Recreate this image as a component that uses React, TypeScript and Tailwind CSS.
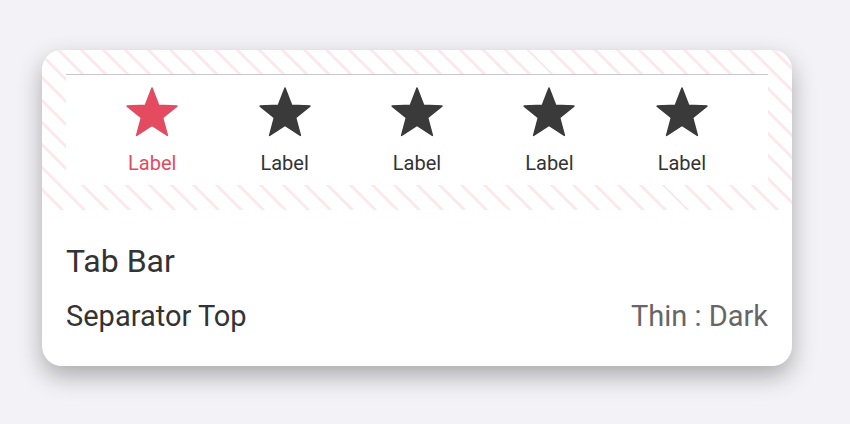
import React from "react";

function starPoints(cx: number, cy: number, R: number, r: number) {
  const pts: string[] = [];
  for (let i = 0; i < 10; i++) {
    const a = ((-90 + i * 36) * Math.PI) / 180;
    const rad = i % 2 === 0 ? R : r;
    pts.push(`${(cx + rad * Math.cos(a)).toFixed(2)},${(cy + rad * Math.sin(a)).toFixed(2)}`);
  }
  return pts.join(" ");
}

function Star({ color }: { color: string }) {
  return (
    <svg width="54" height="50" viewBox="0 0 54 50">
      <polygon
        points={starPoints(27, 27.2, 26.2, 11.2)}
        fill={color}
        stroke={color}
        strokeWidth="1.5"
        strokeLinejoin="round"
      />
    </svg>
  );
}

export default function App() {
  const items = [0, 1, 2, 3, 4];
  return (
    <div className="min-h-[424px] w-[850px] bg-[#f3f3f7] pl-[42px] pt-[50px] font-['Roboto',sans-serif]">
      <div className="w-[750px] overflow-hidden rounded-[20px] bg-white shadow-[0_10px_24px_rgba(0,0,0,0.3)]">
        <div className="bg-[repeating-linear-gradient(45deg,#ffffff_0px,#ffffff_13px,#fde8ec_13px,#fde8ec_15.8px)] px-6 pb-[25px] pt-6">
          <div className="flex border-t border-[#c8c8cc] bg-white px-5 pb-[10px] pt-[12px]">
            {items.map((i) => (
              <div key={i} className="flex flex-1 flex-col items-center">
                <Star color={i === 0 ? "#e44b61" : "#3a3a3a"} />
                <div
                  className={`mt-[14px] text-[20px] leading-6 ${i === 0 ? "text-[#e44b61]" : "text-[#333333]"}`}
                >
                  Label
                </div>
              </div>
            ))}
          </div>
        </div>
        <div className="px-6 pb-[33px] pt-8">
          <div className="text-[32px] leading-[38px] text-[#333333]">Tab Bar</div>
          <div className="mt-[19px] flex items-baseline justify-between text-[29px] leading-[34px]">
            <span className="text-[#333333]">Separator Top</span>
            <span className="text-[#666666]">Thin : Dark</span>
          </div>
        </div>
      </div>
    </div>
  );
}
